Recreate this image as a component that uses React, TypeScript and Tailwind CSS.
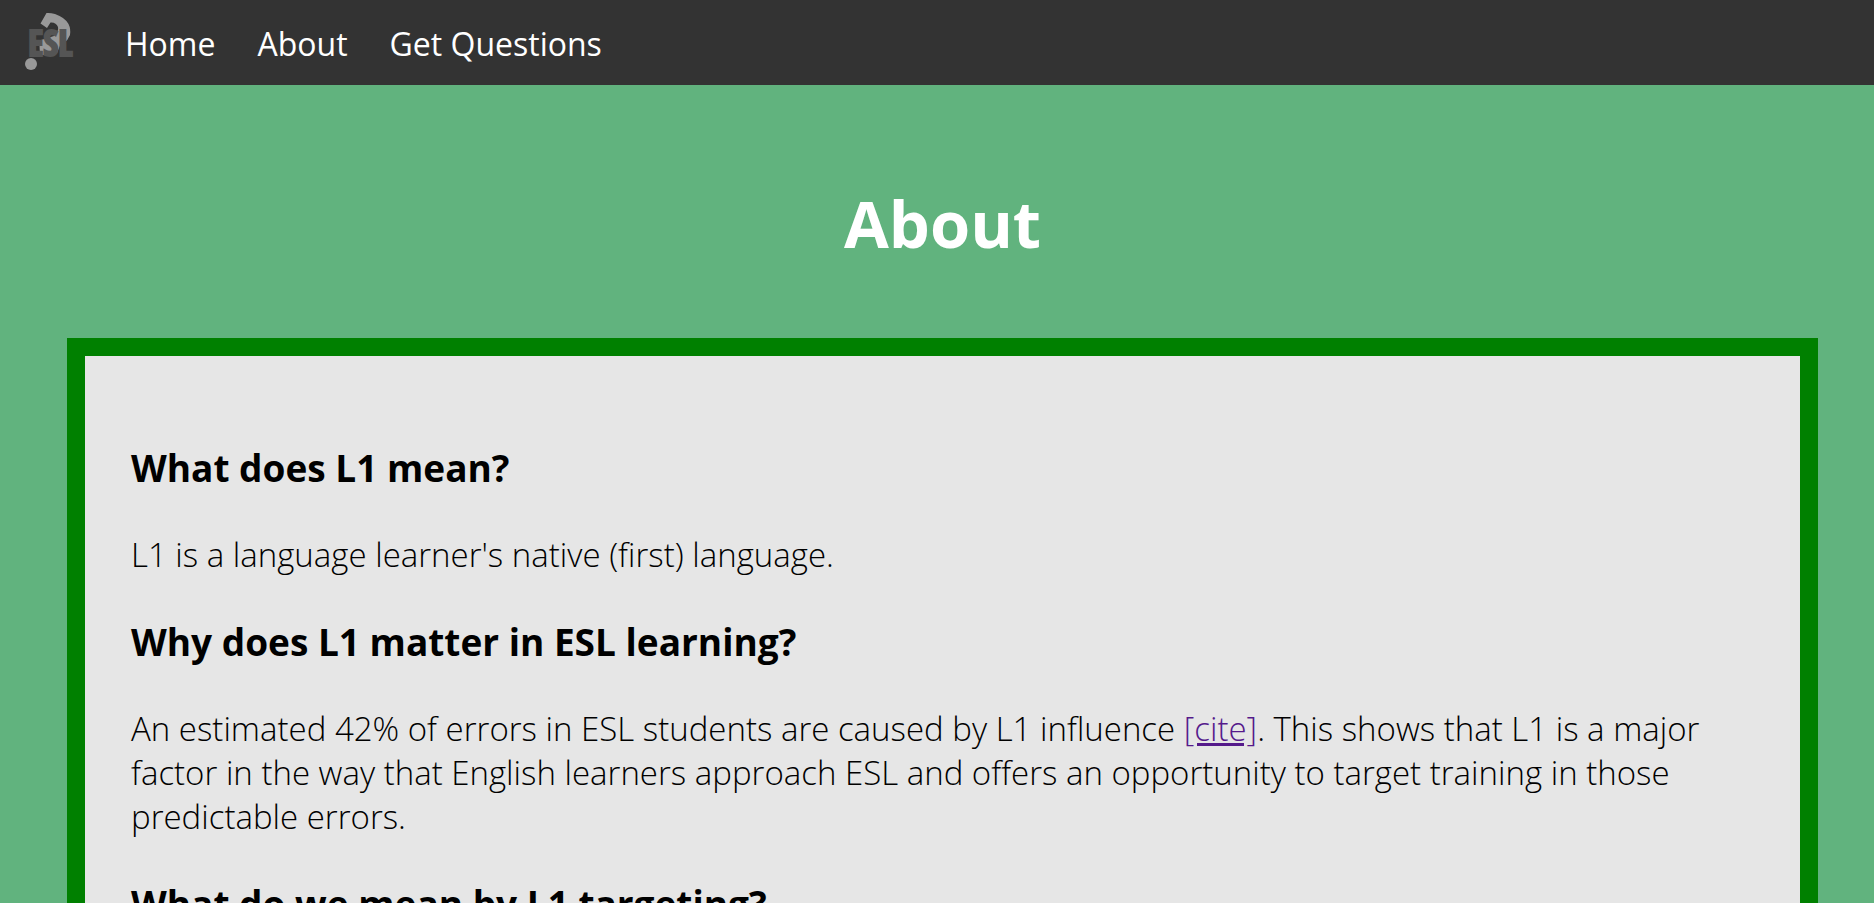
const links = ['Home', 'About', 'Get Questions'];

function Logo() {
  return (
    <svg viewBox="0 0 54 61" className="block h-[61px] w-[54px]" role="img" aria-label="ESL">
      <path d="M16.5 11.5 L22.5 1 Q26 0.5 31 2 Q41 5.5 44.5 12 Q47 17 46 23 Q44 28 40 31 L36 33.5 L33 41 L16 43.5 L15.5 33 L17 28 L30 24 Q35 20 34 15 Q32 10 26.5 10.5 L23 16 Z" fill="#999999" />
      <circle cx="7" cy="52" r="6" fill="#999999" />
      <text x="4" y="44" className="fill-[#555555] stroke-[#555555] stroke-2 font-['Open_Sans_Condensed','Roboto_Condensed','Liberation_Sans_Narrow','Lato',sans-serif] text-[36px] font-black">ESL</text>
    </svg>
  );
}

export default function App() {
  return (
    <div className="min-h-screen bg-[#61b37e] font-['Open_Sans','Noto_Sans',sans-serif] text-black">
      <nav className="flex h-[85px] items-center bg-[#333333] pl-6">
        <a href="#home" className="mr-[47px]"><Logo /></a>
        <ul className="flex gap-[42px] pt-0.5 text-[32px] leading-[44px] text-white">
          {links.map((l) => (
            <li key={l}><a href="#top">{l}</a></li>
          ))}
        </ul>
      </nav>
      <main className="pr-14 pl-[67px]">
        <h1 className="pt-[94px] pb-[71px] text-center text-[65px] leading-[88px] font-bold text-white">About</h1>
        <article className="border-[18px] border-[#008000] bg-[#e6e6e6] px-[46px] pt-[86px] pb-20 text-[33px] leading-[44px] font-light">
          <h2 className="mb-[39px] text-[37px] leading-[52px] font-bold">What does L1 mean?</h2>
          <p className="mb-[39px]">L1 is a language learner's native (first) language.</p>
          <h2 className="mb-[39px] text-[37px] leading-[52px] font-bold">Why does L1 matter in ESL learning?</h2>
          <p className="mb-[39px]">
            An estimated 42% of errors in ESL students are caused by L1 influence{' '}
            <a href="#cite" className="text-[#551a8b] underline">[cite]</a>. This shows that L1 is a major factor in the way that English learners approach ESL and offers an opportunity to target training in those predictable errors.
          </p>
          <h2 className="text-[37px] leading-[52px] font-bold">What do we mean by L1 targeting?</h2>
        </article>
      </main>
    </div>
  );
}
